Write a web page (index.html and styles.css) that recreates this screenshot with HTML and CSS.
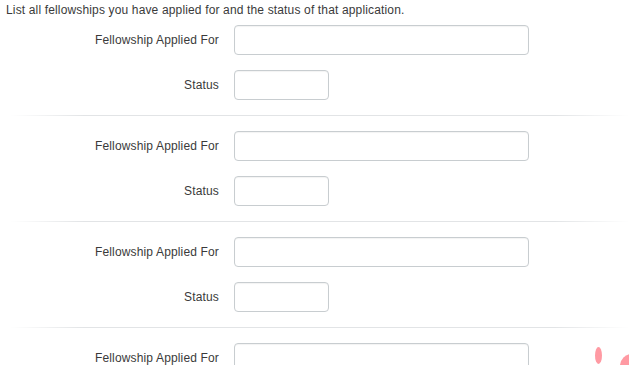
FILE: index.html
```html
<!DOCTYPE html>
<html>
<head>
<meta charset="utf-8">
<link rel="stylesheet" href="styles.css">
</head>
<body>
<p class="intro">List all fellowships you have applied for and the status of that application.</p>
<div class="group">
  <label class="label">Fellowship Applied For</label>
  <input class="field field-wide" type="text">
  <label class="label">Status</label>
  <input class="field field-short" type="text">
</div>
<div class="sep"></div>
<div class="group">
  <label class="label">Fellowship Applied For</label>
  <input class="field field-wide" type="text">
  <label class="label">Status</label>
  <input class="field field-short" type="text">
</div>
<div class="sep"></div>
<div class="group">
  <label class="label">Fellowship Applied For</label>
  <input class="field field-wide" type="text">
  <label class="label">Status</label>
  <input class="field field-short" type="text">
</div>
<div class="sep"></div>
<div class="group">
  <label class="label">Fellowship Applied For</label>
  <input class="field field-wide" type="text">
</div>
<div class="blob blob-a"></div>
<div class="blob blob-b"></div>
</body>
</html>
```
FILE: styles.css
```css
html, body {
  margin: 0;
  padding: 0;
  background: #fff;
  overflow: hidden;
}
body {
  font-family: "Liberation Sans", Arial, sans-serif;
  font-size: 12px;
  letter-spacing: 0.15px;
  color: #3a3a3a;
  height: 365px;
  position: relative;
}
.intro {
  margin: 0;
  padding: 3px 0 0 6px;
  line-height: 15px;
  height: 22px;
}
.group {
  display: grid;
  grid-template-columns: 219px auto;
  column-gap: 15px;
  row-gap: 15px;
  align-items: center;
  justify-items: start;
}
.label {
  justify-self: end;
  line-height: 14px;
}
.field {
  box-sizing: border-box;
  height: 30px;
  margin: 0;
  padding: 4px 8px;
  border: 1px solid #c8cdd0;
  border-radius: 4px;
  background: #fff;
  box-shadow: inset 0 1px 1px rgba(0,0,0,0.05);
  font: inherit;
}
.field-wide { width: 295px; }
.field-short { width: 95px; }
.sep {
  height: 1px;
  margin: 15px 0 15px 10px;
  background: linear-gradient(to right, rgba(220,222,225,0) 0%, #e2e4e6 12%, #e2e4e6 88%, rgba(220,222,225,0) 100%);
}
.blob {
  position: absolute;
  background: #ff9aa3;
  border-radius: 50%;
}
.blob-a {
  left: 595px;
  top: 347px;
  width: 7px;
  height: 17px;
}
.blob-b {
  left: 620px;
  top: 354px;
  width: 24px;
  height: 24px;
}
```
